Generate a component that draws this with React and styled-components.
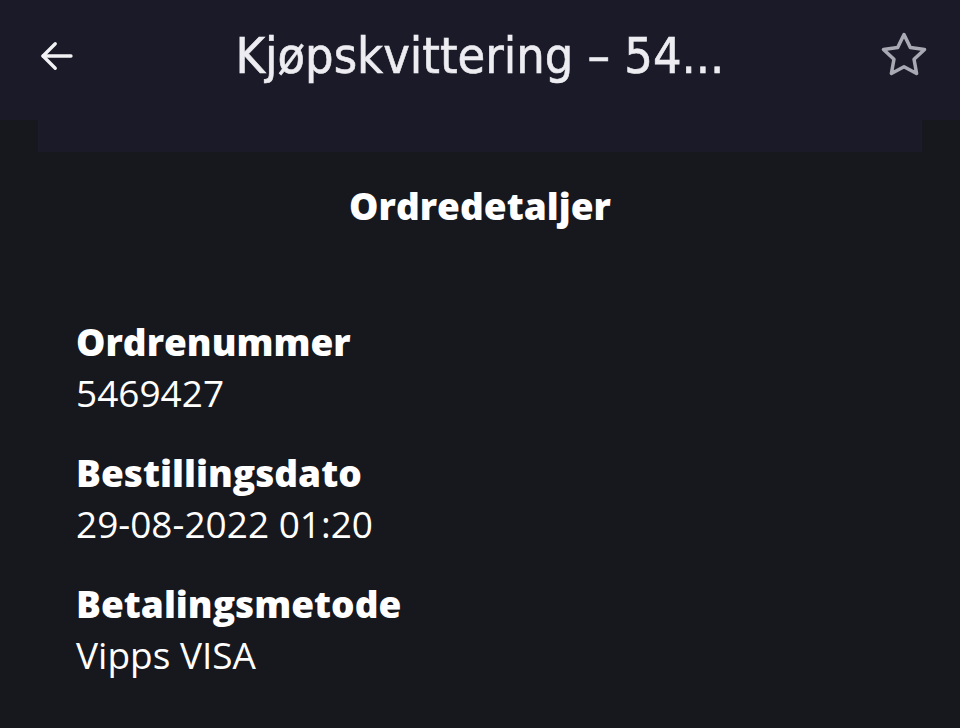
import styled, {createGlobalStyle} from 'styled-components'

const GlobalStyle = createGlobalStyle`
  html, body {
    margin: 0;
    padding: 0;
    background: #17181d;
  }
  body {
    font-family: "Open Sans", "Noto Sans", sans-serif;
    color: #ffffff;
  }
`

const Page = styled.div`
  width: 960px;
  height: 728px;
  overflow: hidden;
  background: #17181d;
`

const Header = styled.header`
  display: grid;
  grid-template-columns: 112px 1fr 112px;
  align-items: center;
  height: 120px;
  background: #1b1a29;
`

const IconButton = styled.button`
  display: flex;
  align-items: center;
  justify-content: ${(props) => props.side === 'right' ? 'flex-end' : 'flex-start'};
  padding: 0 ${(props) => props.side === 'right' ? '28px' : '0'} 8px ${(props) => props.side === 'right' ? '0' : '36px'};
  height: 100%;
  background: none;
  border: none;
  color: ${(props) => props.side === 'right' ? '#a9a9b4' : '#f2f2f5'};
`

const Title = styled.h1`
  margin: 0 0 8px;
  text-align: center;
  font-family: "DejaVu Sans Condensed", "DejaVu Sans", sans-serif;
  font-stretch: condensed;
  font-weight: 400;
  font-size: 50px;
  color: #ececf1;
  white-space: nowrap;
  -webkit-text-stroke: 0.6px #ececf1;
`

const CardTop = styled.div`
  height: 32px;
  margin: 0 38px;
  background: #1b1a29;
`

const Section = styled.section`
  padding: 31px 0 0;
`

const SectionTitle = styled.h2`
  margin: 0 0 88px;
  text-align: center;
  font-size: 37px;
  font-weight: 800;
  line-height: 46px;
`

const List = styled.dl`
  display: flex;
  flex-direction: column;
  gap: 29px;
  margin: 0;
  padding: 0 76px;
`

const Field = styled.div`
  display: flex;
  flex-direction: column;
`

const Label = styled.dt`
  font-size: 37px;
  font-weight: 800;
  line-height: 50px;
`

const Value = styled.dd`
  margin: 0;
  font-size: 37px;
  font-weight: 400;
  line-height: 52px;
`

const fields = [
    {label: 'Ordrenummer', value: '5469427'},
    {label: 'Bestillingsdato', value: '29-08-2022 01:20'},
    {label: 'Betalingsmetode', value: 'Vipps VISA'},
]

const App = () => {
    return (
        <Page>
            <GlobalStyle />
            <Header>
                <IconButton side="left">
                    <svg width="42" height="42" viewBox="0 0 24 24" fill="none" stroke="currentColor" strokeWidth="1.9" strokeLinecap="round" strokeLinejoin="round">
                        <path d="M20 12H4" />
                        <path d="M11 5l-7 7 7 7" />
                    </svg>
                </IconButton>
                <Title>Kjøpskvittering – 54...</Title>
                <IconButton side="right">
                    <svg width="56" height="56" viewBox="0 0 24 24" fill="none" stroke="currentColor" strokeWidth="1.5" strokeLinejoin="round">
                        <path d="M12 2.8l2.7 5.6 6.1.8-4.5 4.2 1.1 6.1L12 16.6l-5.4 2.9 1.1-6.1-4.5-4.2 6.1-.8z" />
                    </svg>
                </IconButton>
            </Header>
            <CardTop />
            <Section>
                <SectionTitle>Ordredetaljer</SectionTitle>
                <List>
                    {fields.map((f) => (
                        <Field key={f.label}>
                            <Label>{f.label}</Label>
                            <Value>{f.value}</Value>
                        </Field>
                    ))}
                </List>
            </Section>
        </Page>
    )
}

export default App
